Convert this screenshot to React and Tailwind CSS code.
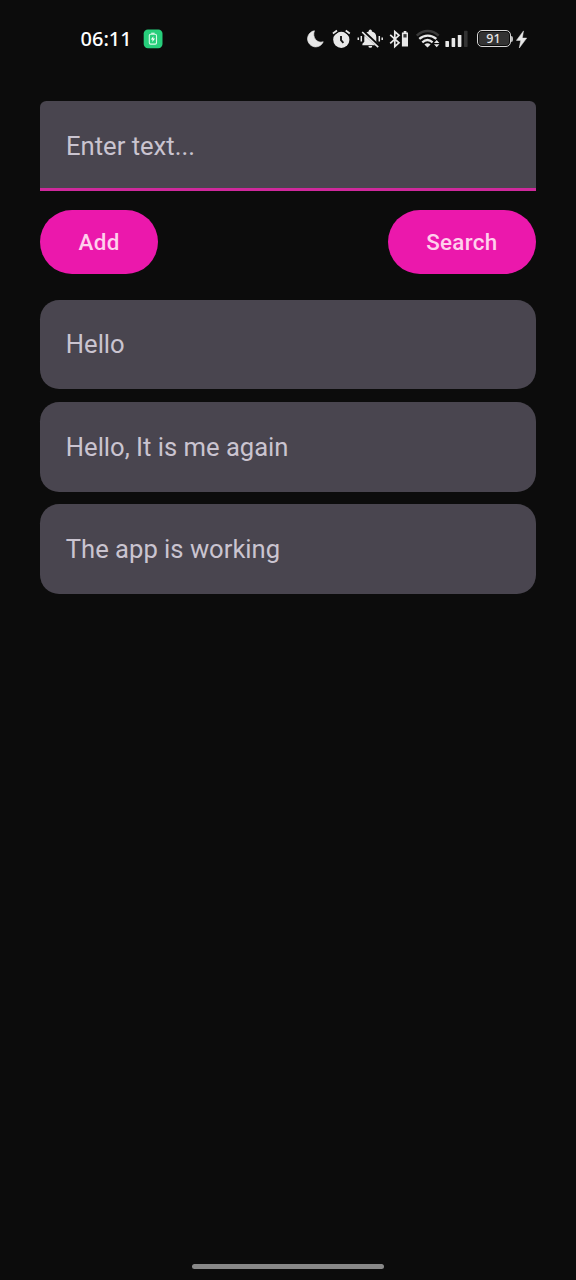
const notes = ["Hello", "Hello, It is me again", "The app is working"];

function StatusBar() {
  return (
    <header className="flex h-[77px] shrink-0 items-center pl-20 pr-12 text-[#e8e8e8]">
      <span className="w-[63px] pl-[0.5px] font-['Noto_Sans',sans-serif] text-[20px] leading-6 font-medium text-white">06:11</span>
      <svg className="size-5 shrink-0" viewBox="0 0 20 20" fill="none">
        <rect x="0.7" y="0.4" width="18.8" height="18.8" rx="4.2" fill="#27ce7b" />
        <rect x="6.3" y="5.3" width="7.2" height="9.8" rx="1.3" stroke="#d9f8e8" strokeWidth="1.1" />
        <path d="M8.2 4.3h3.4" stroke="#d9f8e8" strokeWidth="1.2" />
        <path d="M10.4 7.2 7.8 10.5h1.8L9.3 13l2.8-3.4h-1.9z" fill="#fff" />
      </svg>
      <div className="ml-auto flex h-6 items-center">
        <svg className="h-6 w-[24px]" viewBox="306 26.5 24 24" fill="currentColor">
          <path d="M314.4 30.3A8.1 8.1 0 1 0 323.2 41.3C317 43.4 311.8 36.5 314.4 30.3Z" stroke="currentColor" strokeWidth=".7" strokeLinejoin="round" />
        </svg>
        <svg className="h-6 w-[26px]" viewBox="330 26.5 26 24" fill="currentColor">
          <circle cx="341.3" cy="39.3" r="8.1" />
          <path d="m333.1 33.1 4.1-3M345.5 30.1l4.1 3" stroke="#0c0c0c" strokeWidth="4" fill="none" />
          <path d="m332.9 33 4.1-3M345.7 30l4.1 3" stroke="currentColor" strokeWidth="1.8" fill="none" />
          <path d="M341 35.4v4.3l2.4 2.6" stroke="#171717" strokeWidth="1.9" fill="none" />
        </svg>
        <svg className="h-6 w-[31px]" viewBox="356 26.5 31 24" fill="currentColor">
          <path d="M362.4 44.8v-1.6l1.9-1.9v-4.5c0-3.2 1.8-5.2 4.4-5.7v-.6a1.6 1.6 0 0 1 3.2 0v.6c2.6.5 4.4 2.5 4.4 5.7v4.5l1.9 1.9v1.6zM368.4 45.4h3.8a1.9 1.9 0 0 1-3.8 0z" />
          <path d="m363 30.9 16 15.2" stroke="#0c0c0c" strokeWidth="3.4" />
          <path d="m362.2 31.5 16 15.2" stroke="currentColor" strokeWidth="1.7" />
          <path d="M358.3 37v2.5M361.3 35.5v5.4M379.3 35.5v5.4M382.2 37v2.5" stroke="currentColor" strokeWidth="1.5" />
        </svg>
        <svg className="h-6 w-[25px]" viewBox="387 26.5 25 24" fill="none">
          <path d="m390.2 34.3 8.8 8-4.2 3.7V31.2l4.2 3.6-8.8 8" stroke="currentColor" strokeWidth="1.7" />
          <path d="M403.7 30.5h2.7v1.6h1.6v14h-6.1v-14h1.8z" fill="currentColor" />
          <rect x="403.4" y="33.6" width="3.2" height="3.4" fill="#3b3b3b" />
        </svg>
        <svg className="h-6 w-[30px]" viewBox="412 26.5 30 24" fill="none">
          <path d="M416.8 35.1c6.5-6.1 15.4-6.1 21.9 0" stroke="#3a3a3a" strokeWidth="2.5" />
          <path d="M419.3 38.4c5-4.5 12-4.5 17 0M422.3 41.8c3.2-2.8 7.1-2.8 10.3 0" stroke="currentColor" strokeWidth="2.3" />
          <path d="M424.4 44q3.2-2.5 6.2 0l-3.1 3zM436.7 39.5l2.7 3H434zM436.7 46.7l2.7-3H434z" fill="currentColor" />
        </svg>
        <svg className="h-6 w-[32px]" viewBox="442 26.5 32 24" fill="currentColor">
          <rect x="445.4" y="40.4" width="3.6" height="6" rx=".6" />
          <rect x="451.6" y="37.6" width="3.6" height="8.8" rx=".6" />
          <rect x="457.8" y="34.4" width="3.6" height="12" rx=".6" />
          <rect x="464" y="30.3" width="3.6" height="16.1" rx=".6" fill="#333" />
        </svg>
        <div className="flex items-center pl-[3px]">
          <span className="flex h-[17px] w-[34px] items-center justify-center rounded-[5px] border-[1.5px] border-[#d6d6d6] p-px">
            <span className="flex h-full w-full items-center justify-center rounded-[3px] bg-[#333] pt-[2px] pr-px font-['Noto_Sans',sans-serif] text-[12.5px] leading-none font-medium">91</span>
          </span>
          <span className="h-[6px] w-[2px] rounded-r-sm bg-[#bcbcbc]" />
        </div>
        <svg className="ml-[3px] h-6 w-[12px]" viewBox="516 26.5 12 24" fill="currentColor">
          <path d="M523.5 30.4 516.4 39.9h4.3l-1.4 7.6 7.4-9.9h-4.4z" stroke="currentColor" strokeWidth=".5" />
        </svg>
      </div>
    </header>
  );
}

function Button({ children }) {
  return (
    <button className="h-16 rounded-full bg-[#eb18ac] px-[38.6px] font-medium text-[22.4px] leading-8 tracking-[0.3px] text-[#ffd0ec]">
      {children}
    </button>
  );
}

export default function App() {
  return (
    <div className="flex h-[1280px] w-[576px] flex-col bg-[#0c0c0c] font-['Roboto',sans-serif]">
      <StatusBar />
      <main className="flex flex-1 flex-col px-10 pt-6">
        <input
          aria-label="Text"
          placeholder="Enter text..."
          className="h-[90px] shrink-0 rounded-t-[6.4px] border-b-[3px] border-[#cf299c] bg-[#49454f] px-[26px] pt-[2px] text-[25.6px] text-[#cac4d0] outline-none placeholder:text-[#cac4d0] placeholder:opacity-100"
        />
        <div className="mt-[19px] flex justify-between">
          <Button>Add</Button>
          <Button>Search</Button>
        </div>
        <ul className="mt-[25.6px] flex flex-col gap-[12.8px]">
          {notes.map((note) => (
            <li key={note} className="flex h-[89.6px] items-center rounded-[19.2px] bg-[#49454f] px-[25.8px] text-[25.6px] text-[#cac4d0]">
              {note}
            </li>
          ))}
        </ul>
      </main>
      <div className="mx-auto mb-[11px] h-[5px] w-48 shrink-0 rounded-full bg-[#888]" />
    </div>
  );
}
